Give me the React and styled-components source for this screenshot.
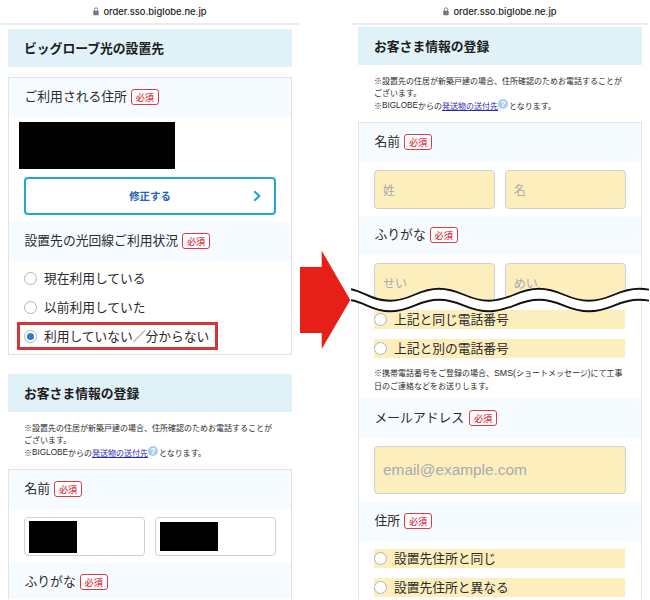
import React from 'react';
import styled, { createGlobalStyle } from 'styled-components';

const GlobalStyle = createGlobalStyle`
    * {
        box-sizing: border-box;
    }
    body {
        margin: 0;
        background-color: white;
        color: #2b2b2b;
        font-family: "Noto Sans CJK JP", sans-serif;
    }
`;
const Page = styled.div`
    position: relative;
    display: flex;
    justify-content: space-between;
    width: 650px;
    height: 600px;
    overflow: hidden;
`;
const Phone = styled.div`
    width: 300px;
    height: 599px;
    overflow: hidden;
`;
const UrlBar = styled.div`
    display: flex;
    justify-content: center;
    align-items: center;
    gap: 4px;
    height: 25px;
    margin: 0 1px;
    border-bottom: 2px solid #ececec;
    font-family: Inter, sans-serif;
    font-size: 9.4px;
    font-weight: 500;
    color: #222;
`;
const Content = styled.div`
    width: 284px;
    margin: 0 8px;
    padding-top: ${(props) => props.$top}px;
`;
const Heading = styled.h2`
    display: flex;
    align-items: center;
    height: 38px;
    margin: 0;
    padding: 0 0 2px 16px;
    background-color: #e0f1f8;
    color: #1c1c1c;
    font-size: 12.8px;
    font-weight: 700;
`;
const Panel = styled.div`
    border: 1px solid #e3e3e3;
    margin-top: ${(props) => props.$gap || 0}px;
`;
const Label = styled.div`
    display: flex;
    align-items: center;
    height: 39px;
    padding: 0 0 4px 15.5px;
    background-color: #f6fbff;
    font-size: 12.8px;
    line-height: 19px;
`;
const Required = styled.span`
    display: flex;
    justify-content: center;
    align-items: center;
    width: 28px;
    height: 16px;
    margin: 3px 0 0 ${(props) => props.$gap || 4}px;
    border: 1.4px solid #dd3a48;
    border-radius: 3px;
    background-color: white;
    color: #dd3a48;
    font-size: 9.2px;
    font-weight: 500;
    line-height: 12px;
`;
const AddressBody = styled.div`
    height: 105px;
    padding: 5px 16px 0 10px;
`;
const Mask = styled.div`
    width: ${(props) => props.$w}px;
    height: ${(props) => props.$h}px;
    background-color: black;
`;
const EditButton = styled.button`
    display: flex;
    align-items: center;
    justify-content: flex-end;
    width: 252px;
    height: 38px;
    margin: 8px 0 0 5px;
    padding: 0 13px 1px 0;
    border: 2px solid #21aace;
    border-radius: 4px;
    background-color: white;
    color: #1f63b5;
    font-family: inherit;
    font-size: 10.4px;
    font-weight: 700;

    span {
        flex: 1;
        text-align: center;
        padding-left: 21px;
    }
`;
const Fields = styled.div`
    display: flex;
    gap: 10px;
    height: ${(props) => props.$h || 54}px;
    padding: 8px 15.5px 0 15px;
    overflow: hidden;
`;
const Field = styled.div`
    display: flex;
    align-items: center;
    flex: 1;
    height: ${(props) => props.$h || 39}px;
    padding-left: ${(props) => props.$pad || 8}px;
    border: 1.5px solid #cfd0d2;
    border-radius: 4px;
    background-color: ${(props) => (props.$filled ? 'white' : '#fdeebd')};
    color: #a9abb0;
    font-size: 12px;
`;
const Email = styled.span`
    font-family: "Liberation Sans", sans-serif;
    font-size: 15.4px;
`;
const Options = styled.div`
    display: flex;
    flex-direction: column;
    gap: 10px;
    height: ${(props) => props.$h}px;
    padding: ${(props) => props.$top}px 16px 0 15px;
`;
const Option = styled.div`
    position: relative;
    display: flex;
    align-items: center;
    flex-shrink: 0;
    height: 19px;
    gap: 7px;
    background-color: ${(props) => (props.$yellow ? '#fdeebd' : 'transparent')};
    font-size: 12.75px;
    line-height: 17px;
    padding-bottom: 2px;
`;
const Radio = styled.span`
    display: flex;
    justify-content: center;
    align-items: center;
    width: 13px;
    height: 13px;
    margin-top: 2px;
    border: 1px solid #b3b3b3;
    border-radius: 50%;
    background-color: white;

    &::after {
        content: '';
        width: 7px;
        height: 7px;
        border-radius: 50%;
        background-color: ${(props) => (props.$checked ? '#2580ca' : 'transparent')};
    }
`;
const Highlight = styled.div`
    position: absolute;
    top: -5px;
    left: -7px;
    width: 201px;
    height: 28px;
    border: 3px solid #d23636;
`;
const Note = styled.p`
    margin: 0;
    padding: ${(props) => props.$pad};
    font-size: 8px;
    line-height: 12px;
    white-space: nowrap;

    u {
        color: #2a2ab0;
    }
`;
const NoteLine = styled.span`
    display: flex;
    align-items: center;
    height: 13px;
`;
const Latin = styled.span`
    font-family: "Liberation Sans", sans-serif;
    font-size: ${(props) => props.$size || 8.2}px;
`;
const Help = styled.span`
    display: flex;
    justify-content: center;
    align-items: center;
    width: 10px;
    height: 10px;
    margin: -4px 1px 0 0;
    border-radius: 50%;
    background-color: #a9cdf0;
    color: white;
    font-family: "Liberation Sans", sans-serif;
    font-size: 9px;
    font-weight: 700;
`;
const Spacer = styled.div`
    height: 19px;
`;
const Arrow = styled.svg`
    position: absolute;
    left: 300px;
    top: 250px;
`;
const Wave = styled.svg`
    position: absolute;
    left: 351px;
    top: 280px;
`;

const LockIcon = () => (
    <svg width="6" height="9" viewBox="0 0 6 9">
        <path d="M1.4 4V2.4a1.6 1.6 0 0 1 3.2 0V4" fill="none" stroke="#777" strokeWidth="0.9" />
        <rect x="0.3" y="3.7" width="5.4" height="4.6" rx="0.8" fill="#777" />
    </svg>
)

const Chevron = () => (
    <svg width="8" height="12" viewBox="0 0 8 12">
        <path d="M1.3 1.2L6.2 6L1.3 10.8" fill="none" stroke="#21aace" strokeWidth="2.2" />
    </svg>
)

const AddressBar = () => (
    <UrlBar>
        <LockIcon />
        <span>order.sso.biglobe.ne.jp</span>
    </UrlBar>
)

const Item = ({ children, gap }) => (
    <Label>
        {children}
        <Required $gap={gap}>必須</Required>
    </Label>
)

const Choice = ({ children, checked, yellow }) => (
    <Option $yellow={yellow}>
        <Radio $checked={checked} />
        {children}
        {checked && <Highlight />}
    </Option>
)

const CustomerIntro = () => (
    <>
        <Heading>お客さま情報の登録</Heading>
        <Note $pad="10px 0 10px 16px">
            ※設置先の住居が新築戸建の場合、住所確認のためお電話することが<br />
            ございます。
            <NoteLine>
                ※<Latin>BIGLOBE</Latin>からの<u>発送物の送付先</u><Help>?</Help>となります。
            </NoteLine>
        </Note>
    </>
)

const App = () => {
  return (
    <Page>
        <GlobalStyle />
        <Phone>
            <AddressBar />
            <Content $top={4}>
                <Heading>ビッグローブ光の設置先</Heading>
                <Panel $gap={10}>
                    <Item>ご利用される住所</Item>
                    <AddressBody>
                        <Mask $w={156} $h={47} />
                        <EditButton>
                            <span>修正する</span>
                            <Chevron />
                        </EditButton>
                    </AddressBody>
                    <Item>設置先の光回線ご利用状況</Item>
                    <Options $h={93} $top={8}>
                        <Choice>現在利用している</Choice>
                        <Choice>以前利用していた</Choice>
                        <Choice checked>利用していない／分からない</Choice>
                    </Options>
                </Panel>
                <Spacer />
                <CustomerIntro />
                <Panel>
                    <Item>名前</Item>
                    <Fields>
                        <Field $filled $pad={4}><Mask $w={48} $h={32} /></Field>
                        <Field $filled $pad={4}><Mask $w={58} $h={29} /></Field>
                    </Fields>
                    <Item>ふりがな</Item>
                </Panel>
            </Content>
        </Phone>
        <Phone>
            <AddressBar />
            <Content $top={2}>
                <CustomerIntro />
                <Panel>
                    <Item>名前</Item>
                    <Fields>
                        <Field>姓</Field>
                        <Field>名</Field>
                    </Fields>
                    <Item>ふりがな</Item>
                    <Fields $h={45}>
                        <Field>せい</Field>
                        <Field>めい</Field>
                    </Fields>
                    <Options $h={57} $top={10}>
                        <Choice yellow>上記と同じ電話番号</Choice>
                        <Choice yellow>上記と別の電話番号</Choice>
                    </Options>
                    <Note $pad="10px 0 7px 15px">
                        ※携帯電話番号をご登録の場合、<Latin $size={8.8}>SMS(</Latin>ショートメッセージ<Latin>)</Latin>にて工事<br />
                        日のご連絡などをお送りします。
                    </Note>
                    <Item gap={5}>メールアドレス</Item>
                    <Fields $h={64}>
                        <Field $h={48}><Email>email@example.com</Email></Field>
                    </Fields>
                    <Item>住所</Item>
                    <Options $h={80} $top={8}>
                        <Choice yellow>設置先住所と同じ</Choice>
                        <Choice yellow>設置先住所と異なる</Choice>
                    </Options>
                </Panel>
            </Content>
        </Phone>
        <Arrow width="51" height="100" viewBox="0 0 51 100">
            <path d="M0 17H21.7V0.7L50.3 50L21.7 99V83H0Z" fill="#e71f19" />
        </Arrow>
        {/* torn page divider */}
        <Wave width="298" height="36" viewBox="0 0 298 36">
            <path
                d="M0 9.2C14 12 21 20.7 39 20.7C61 20.7 66 8.8 88 8.8S116 20.7 138 20.7S166 8.8 188 8.8S216 20.7 238 20.7S266 8.8 288 8.8Q294 8.8 299 9.8V20.8Q294 19.8 288 19.8C266 19.8 260 31.3 238 31.3S210 19.8 188 19.8S160 31.3 138 31.3S110 19.8 88 19.8S61 31.3 39 31.3C21 31.3 14 22 0 20.2Z"
                fill="white"
            />
            <path
                d="M0 9.2C14 12 21 20.7 39 20.7C61 20.7 66 8.8 88 8.8S116 20.7 138 20.7S166 8.8 188 8.8S216 20.7 238 20.7S266 8.8 288 8.8Q294 8.8 299 9.8M0 20.2C14 22 21 31.3 39 31.3C61 31.3 66 19.8 88 19.8S116 31.3 138 31.3S166 19.8 188 19.8S216 31.3 238 31.3S266 19.8 288 19.8Q294 19.8 299 20.8"
                fill="none"
                stroke="#111"
                strokeWidth="1.9"
            />
        </Wave>
    </Page>
  )
}

export default App
